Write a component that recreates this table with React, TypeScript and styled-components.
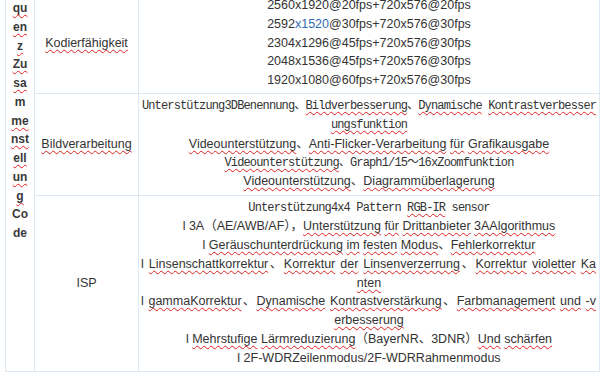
import React from "react";
import styled, { createGlobalStyle } from "styled-components";

const GlobalStyle = createGlobalStyle`
  html, body {
    margin: 0;
    padding: 0;
    background: #ffffff;
    overflow: hidden;
  }
`;

const Page = styled.div`
  width: 604px;
  height: 372px;
  overflow: hidden;
`;

const Table = styled.table`
  border-collapse: collapse;
  table-layout: fixed;
  width: 595px;
  margin: -8px 0 0 5px;
  color: #333333;
  font-family: "Liberation Sans", Arial, "Noto Sans CJK SC", sans-serif;
  font-size: 12.5px;
  line-height: 18.75px;
`;

const Cell = styled.td<{ $width?: number }>`
  border: 1px solid #dce8f4;
  padding: 3px 0 3.5px;
  text-align: center;
  vertical-align: middle;
  width: ${(p) => (p.$width ? `${p.$width}px` : "auto")};
`;

const SideCell = styled(Cell)`
  vertical-align: top;
  padding-top: 6px;
  font-weight: 700;
  font-size: 12px;
  color: #3a3a3a;
`;

const Line = styled.div<{ $mono?: boolean; $full?: boolean }>`
  white-space: nowrap;
  ${(p) =>
    p.$mono &&
    `
    font-family: "Liberation Mono", "Noto Sans CJK SC", monospace;
    font-size: 12px;
    letter-spacing: -0.85px;
  `}
  ${(p) =>
    p.$full &&
    `
    white-space: normal;
    text-align: justify;
    text-align-last: justify;
    padding: 0 3px 0 2px;
  `}
`;

const Wavy = styled.span`
  text-decoration: underline wavy #e02020;
  text-decoration-thickness: 1px;
  text-underline-offset: 2px;
  text-decoration-skip-ink: none;
`;

const Link = styled.span`
  color: #2f6cb8;
`;

// {word} -> underlined the way the spell checker marks it
const mark = (s: string) =>
  s.split(/(\{[^}]*\})/).map((part, i) =>
    part.startsWith("{") ? <Wavy key={i}>{part.slice(1, -1)}</Wavy> : part
  );

const side = ["{qu}", "{en}", "{z}", "{Zu}", "{sa}", "m", "{me}", "{nst}", "{ell}", "{un}", "{g}", "Co", "de"];

const bild: { text: string; mono?: boolean; full?: boolean }[] = [
  { text: "Unterstützung3DBenennung、{Bildverbesserung}、{Dynamische} {Kontrastverbesser}", mono: true },
  { text: "{ungsfunktion}", mono: true },
  { text: "{Videounterstützung}、{Anti-Flicker-Verarbeitung} {für} {Grafikausgabe}" },
  { text: "{Videounterstützung}、Graph1/15～16xZoomfunktion", mono: true },
  { text: "{Videounterstützung}、{Diagrammüberlagerung}" },
];

const isp: { text: string; mono?: boolean; full?: boolean }[] = [
  { text: "Unterstützung4x4 Pattern {RGB-IR} sensor", mono: true },
  { text: "l 3A（AE/AWB/AF），{Unterstützung} {für} {Drittanbieter} {3AAlgorithmus}" },
  { text: "l {Geräuschunterdrückung} {im} {festen} {Modus}、{Fehlerkorrektur}" },
  { text: "l {Linsenschattkorrektur}、{Korrektur} {der} {Linsenverzerrung}、{Korrektur} {violetter} {Ka}", full: true },
  { text: "{nten}" },
  { text: "l {gammaKorrektur}、{Dynamische} {Kontrastverstärkung}、{Farbmanagement} {und} {-v}", full: true },
  { text: "{erbesserung}" },
  { text: "l {Mehrstufige} {Lärmreduzierung}（BayerNR、3DNR）{Und} {schärfen}" },
  { text: "l 2F-WDRZeilenmodus/2F-WDRRahmenmodus" },
];

const App: React.FC = () => {
  return (
    <Page>
      <GlobalStyle />
      <Table>
        <tbody>
          <tr>
            <SideCell $width={28} rowSpan={3}>
              {side.map((s, idx) => (
                <Line key={idx}>{mark(s)}</Line>
              ))}
            </SideCell>
            <Cell $width={103}>{mark("{Kodierfähigkeit}")}</Cell>
            <Cell>
              <Line>2560x1920@20fps+720x576@20fps</Line>
              <Line>
                2592<Link>x1520</Link>@30fps+720x576@30fps
              </Line>
              <Line>2304x1296@45fps+720x576@30fps</Line>
              <Line>2048x1536@45fps+720x576@30fps</Line>
              <Line>1920x1080@60fps+720x576@30fps</Line>
            </Cell>
          </tr>
          <tr>
            <Cell>{mark("{Bildverarbeitung}")}</Cell>
            <Cell>
              {bild.map((l, idx) => (
                <Line key={idx} $mono={l.mono} $full={l.full}>
                  {mark(l.text)}
                </Line>
              ))}
            </Cell>
          </tr>
          <tr>
            <Cell>ISP</Cell>
            <Cell>
              {isp.map((l, idx) => (
                <Line key={idx} $mono={l.mono} $full={l.full}>
                  {mark(l.text)}
                </Line>
              ))}
            </Cell>
          </tr>
        </tbody>
      </Table>
    </Page>
  );
};

export default App;
